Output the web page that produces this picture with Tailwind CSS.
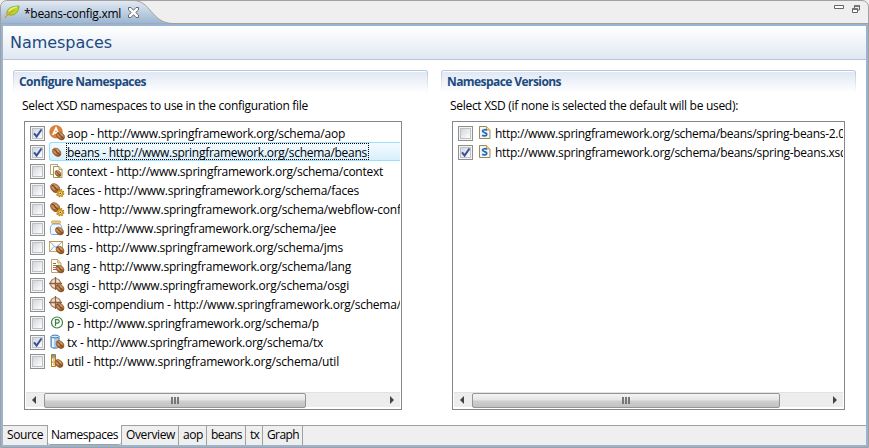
<!DOCTYPE html>
<html lang="en">
<head>
<meta charset="utf-8">
<title>beans-config.xml</title>
<script src="https://cdn.jsdelivr.net/npm/@tailwindcss/browser@4"></script>
</head>
<body class="w-[869px] h-[448px] overflow-hidden bg-[#efefef] font-['Open_Sans','Noto_Sans',sans-serif] text-[12px] leading-[19px] text-black">
<svg class="absolute h-0 w-0">
  <defs>
    <linearGradient id="bg" x1="0" y1="0" x2="1" y2="1"><stop offset="0" stop-color="#dca66e"/><stop offset="1" stop-color="#8a4a1c"/></linearGradient>
    <linearGradient id="tabg" x1="0" y1="0" x2="0" y2="1"><stop offset="0" stop-color="#e3eaf3"/><stop offset="1" stop-color="#9ab4d1"/></linearGradient>
    <symbol id="bean" viewBox="0 0 10 10"><ellipse cx="5" cy="5" rx="5.1" ry="3.7" transform="rotate(42 5 5)" fill="url(#bg)" stroke="#7d4720" stroke-width=".6"/><path d="M1.8 2.2C4.8 2 4.2 5 5.8 5.7S7.6 7 8.3 8" fill="none" stroke="#5b2a0c" stroke-width=".8"/><path d="M2.2 4.2l2.3 2.5M5.3 2.8l2 2" stroke="#e9bd8e" stroke-width=".8"/></symbol>
    <symbol id="gear" viewBox="0 0 8 8"><circle cx="4" cy="4" r="3.2" fill="none" stroke="#a6720b" stroke-width="1.6" stroke-dasharray="1.4 1.1"/><circle cx="4" cy="4" r="2.2" fill="#fff2c0" stroke="#d19a1d" stroke-width="1.5"/><circle cx="4" cy="4" r=".8" fill="#75470b"/></symbol>
    <symbol id="i-aop" viewBox="0 0 16 16"><circle cx="7" cy="6.800" r="6.300" fill="#dc8238" stroke="#c4702c" stroke-width=".7"/><path d="M3.800 10L7 3l3.100 7M5 7.800h4" fill="none" stroke="#fff" stroke-width="1.700"/><use href="#bean" x="7" y="6.500" width="9" height="9"/></symbol>
    <symbol id="i-beans" viewBox="0 0 16 16"><use href="#bean" x="3" y="3.500" width="9.500" height="9.500"/></symbol>
    <symbol id="i-context" viewBox="0 0 16 16"><path d="M1.500 1.500h7v10h-7z" fill="#fff" stroke="#b7a56a"/><path d="M4.500 3.500h5.500l3 3v8h-8.500z" fill="#fff" stroke="#a99453"/><path d="M10 3.500v3h3" fill="#e8d9a4" stroke="#a99453" stroke-width=".8"/><use href="#bean" x="5.500" y="7" width="7" height="7"/></symbol>
    <symbol id="i-faces" viewBox="0 0 16 16"><use href="#bean" x="1" y="1" width="10.500" height="10.500"/><use href="#gear" x="7" y="7" width="8.500" height="8.500"/></symbol>
    <symbol id="i-jee" viewBox="0 0 16 16"><rect x="2.500" y="1" width="9" height="2.500" rx="1" fill="#f4d078" stroke="#c6983e" stroke-width=".8"/><path d="M3.500 4h7.500c.2 1.200 1.800 1.600 1.800 3.500v5c0 1.200-.8 2-2 2H3.400c-1.200 0-2-.8-2-2v-5C1.400 5.600 3.300 5.200 3.500 4z" fill="#eff6fd" stroke="#7fa3d0"/><use href="#bean" x="6" y="6.500" width="9" height="9"/></symbol>
    <symbol id="i-jms" viewBox="0 0 16 16"><path d="M.5 2.500h13v10H.5z" fill="#f8fbff" stroke="#d0a85c"/><path d="M.5 2.500l6.500 6 6.500-6M.5 12.500l5-5.300" fill="none" stroke="#86a2c8" stroke-width=".9"/><path d="M0 2.500h14" stroke="#c6974b"/><use href="#bean" x="6.500" y="6.500" width="9" height="9"/></symbol>
    <symbol id="i-lang" viewBox="0 0 16 16"><path d="M2.500 1.500h6l3.500 3.500v9.500H2.500z" fill="#fff" stroke="#b9a46b"/><path d="M8.500 1.500V5H12" fill="#e9d8a2" stroke="#b9a46b" stroke-width=".8"/><path d="M4 5.500h3M4 11.500h3" stroke="#d84a42"/><path d="M4 7.500h5" stroke="#4c9b4a"/><path d="M4 9.500h4" stroke="#df6050"/><use href="#bean" x="6.500" y="6.500" width="9" height="9"/></symbol>
    <symbol id="i-osgi" viewBox="0 0 16 16"><circle cx="6.500" cy="6.500" r="5" fill="#f3e2d1" stroke="#aa8063" stroke-width="1.200"/><path d="M6.500 0v13M0 6.500h13" stroke="#8c5f43" stroke-width="1.300"/><use href="#bean" x="6.500" y="6.500" width="9" height="9"/></symbol>
    <symbol id="i-p" viewBox="0 0 16 16"><circle cx="8" cy="7.500" r="5.500" fill="#fff" stroke="#3a8040" stroke-width="1.200"/><path d="M6.500 11V4.700h1.800c2.600 0 2.600 3.500 0 3.500H6.500" fill="none" stroke="#3a8040" stroke-width="1.200"/></symbol>
    <symbol id="i-tx" viewBox="0 0 16 16"><path d="M2 2.500v10c0 2.200 8 2.200 8 0v-10" fill="#a9cdef" stroke="#3f78ae"/><path d="M4 4v9" stroke="#e7f4ff" stroke-width="2"/><ellipse cx="6" cy="2.500" rx="4" ry="1.400" fill="#d7eafa" stroke="#3f78ae"/><use href="#bean" x="6.500" y="6" width="9" height="9"/></symbol>
    <symbol id="i-util" viewBox="0 0 16 16"><path d="M2.500 1.500h4v12h-4z" fill="#fff" stroke="#b17d18"/><path d="M3 2h3v2.500H3z" fill="#7298d3"/><path d="M4 6h2v2H4zM4 10h2v2.500H4z" fill="#f0c75c"/><path d="M2.500 5h4M2.500 9h4" stroke="#b17d18"/><use href="#bean" x="5.500" y="6" width="9" height="9"/></symbol>
    <symbol id="i-xsd" viewBox="0 0 12 16"><path d="M.5 1.500h7l3.500 3.500v8.500H.5z" fill="#eef5fd" stroke="#9b8a55"/><path d="M7.500 1.500V5H11" fill="#f6d58d" stroke="#cfa047"/><path d="M7.900 5.300C6.900 4.500 3.500 4.300 3.500 6.100c0 1.800 4.300 1.200 4.300 3.200 0 1.900-3.300 1.800-4.600.9" fill="none" stroke="#2c69a9" stroke-width="1.700"/></symbol>
  </defs>
</svg>

<div class="relative flex h-[448px] w-[869px] flex-col overflow-hidden rounded-t-[7px] border border-[#a0a0a0] bg-[#efefef]">
  <!-- Editor tab strip -->
  <div class="relative flex h-[23px] shrink-0 items-center border-b border-[#a0a0a0]">
    <svg class="absolute -left-px -top-px" width="176" height="24" viewBox="0 0 176 24"><path d="M.5 24V7Q.5.5 7 .5H133C151 .5 151 22.500 172 23.500V24z" fill="url(#tabg)" stroke="#a0a0a0"/></svg>
    <svg class="relative ml-[3px]" width="17" height="14" viewBox="0 0 17 14"><path d="M3 10C2 4 6 1.500 15 1c0 6-5 11-11 8.500z" fill="#b5d92c" stroke="#7da51b" stroke-width=".8"/><path d="M5 6C7 3 10 2.500 13 2" stroke="#e2f27b" stroke-width="1.500" fill="none"/><path d="M.8 13Q4 8.500 11 5" fill="none" stroke="#e79629" stroke-width="1.300"/></svg>
    <span class="relative ml-[3px] mt-[2px] whitespace-nowrap" data-w="97">*beans-config.xml</span>
    <svg class="relative ml-[7px]" width="11" height="11" viewBox="0 0 11 11"><path d="M.5.5H3l2.500 2.800L8 .5h2.500V3L7.700 5.500l2.800 2.500v2.500H8L5.500 7.700 3 10.500H.5V8l2.800-2.500L.5 3z" fill="#fff" stroke="#65686c"/></svg>
    <svg class="ml-auto mr-[7px] mb-[6px]" width="27" height="9" viewBox="0 0 27 9"><path d="M.5.5h9v3h-9z" fill="#fff" stroke="#666"/><path d="M20.500 3.500V1h5v4h-2" fill="none" stroke="#666"/><path d="M20 1h6" stroke="#666" stroke-width="1.500"/><path d="M18.500 4h5v3.500h-5z" fill="#fff" stroke="#666"/><path d="M18 4h6" stroke="#666" stroke-width="1.500"/></svg>
  </div>

  <div class="flex min-h-0 flex-1 flex-col border-2 border-[#99b4d1] bg-white">
    <!-- Form heading -->
    <header class="flex h-[34px] shrink-0 items-center border-b border-[#b7c6dc] bg-gradient-to-b from-white to-[#e1e8f2] pl-[7px] font-['DejaVu_Sans'] text-[16px] text-[#1b4a80]"><h1 class="whitespace-nowrap"><span data-w="102">Namespaces</span></h1></header>

    <main class="flex min-h-0 flex-1 gap-[13px] bg-white pl-[10px] pt-[10px]">
      <section class="w-[415px] shrink-0">
        <div class="h-[23px] rounded-t-[3px] bg-gradient-to-b from-[#b5c5de] to-white px-px pt-px"><h2 class="h-[22px] rounded-t-[2px] border-t border-white bg-gradient-to-b from-[#e1e8f3] to-white pl-[5px] leading-[20px] font-bold text-[#1b4a80] whitespace-nowrap"><span data-w="127">Configure Namespaces</span></h2></div>
        <p class="mt-[3px] ml-[9px] whitespace-nowrap"><span data-w="286">Select XSD namespaces to use in the configuration file</span></p>
        <div class="ml-[11px] mt-[6px] flex h-[289px] w-[378px] flex-col border border-[#828790] px-px pt-px pb-[2px]">
          <div id="left" class="flex-1 overflow-hidden"></div>
          <div class="flex h-[15px] shrink-0 items-center border-t border-[#e2e2e2] bg-[#ededed] pl-[6px] pr-[6px]">
            <svg width="4" height="8" viewBox="0 0 4 8"><path d="M4 0v8L0 4z" fill="#444"/></svg>
            <div class="ml-[8px] flex h-[15px] w-[262px] items-center justify-center gap-[1px] rounded-[2px] border border-[#959595] bg-[linear-gradient(#f4f4f4_0%,#e4e4e4_48%,#cfcfcf_52%,#c2c2c4_100%)]"><i class="h-[7px] w-[2px] bg-[#777]"></i><i class="h-[7px] w-[2px] bg-[#777]"></i><i class="h-[7px] w-[2px] bg-[#777]"></i></div>
            <svg class="ml-auto" width="4" height="8" viewBox="0 0 4 8"><path d="M0 0v8l4-4z" fill="#444"/></svg>
          </div>
        </div>
      </section>
      <section class="w-[415px] shrink-0">
        <div class="h-[23px] rounded-t-[3px] bg-gradient-to-b from-[#b5c5de] to-white px-px pt-px"><h2 class="h-[22px] rounded-t-[2px] border-t border-white bg-gradient-to-b from-[#e1e8f3] to-white pl-[5px] leading-[20px] font-bold text-[#1b4a80] whitespace-nowrap"><span data-w="114">Namespace Versions</span></h2></div>
        <p class="mt-[3px] ml-[9px] whitespace-nowrap"><span data-w="288">Select XSD (if none is selected the default will be used):</span></p>
        <div class="ml-[11px] mt-[6px] flex h-[289px] w-[393px] flex-col border border-[#828790] px-px pt-px pb-[2px]">
          <div id="right" class="flex-1 overflow-hidden"></div>
          <div class="flex h-[15px] shrink-0 items-center border-t border-[#e2e2e2] bg-[#ededed] pl-[6px] pr-[6px]">
            <svg width="4" height="8" viewBox="0 0 4 8"><path d="M4 0v8L0 4z" fill="#444"/></svg>
            <div class="ml-[8px] flex h-[15px] w-[308px] items-center justify-center gap-[1px] rounded-[2px] border border-[#959595] bg-[linear-gradient(#f4f4f4_0%,#e4e4e4_48%,#cfcfcf_52%,#c2c2c4_100%)]"><i class="h-[7px] w-[2px] bg-[#777]"></i><i class="h-[7px] w-[2px] bg-[#777]"></i><i class="h-[7px] w-[2px] bg-[#777]"></i></div>
            <svg class="ml-auto" width="4" height="8" viewBox="0 0 4 8"><path d="M0 0v8l4-4z" fill="#444"/></svg>
          </div>
        </div>
      </section>
    </main>

    <!-- Page tabs -->
    <nav class="flex h-[20px] shrink-0 bg-[#efefef] leading-[18px] whitespace-nowrap">
      <div class="w-[45px] border-t border-r border-[#a0a0a0] pl-[4px]"><span data-w="36">Source</span></div>
      <div class="w-[73px] rounded-b-[3px] border-b border-[#a0a0a0] bg-white pl-[3px] pt-px"><span data-w="67">Namespaces</span></div>
      <div class="w-[58px] border border-b-0 border-[#a0a0a0] pl-[4px]"><span data-w="49">Overview</span></div>
      <div class="w-[28px] border-t border-r border-[#a0a0a0] pl-[4px]"><span data-w="20">aop</span></div>
      <div class="w-[39px] border-t border-r border-[#a0a0a0] pl-[4px]"><span data-w="31">beans</span></div>
      <div class="w-[17px] border-t border-r border-[#a0a0a0] pl-[4px]"><span data-w="9">tx</span></div>
      <div class="w-[40px] border-t border-r border-[#a0a0a0] pl-[4px]"><span data-w="32">Graph</span></div>
      <div class="flex-1 border-t border-[#a0a0a0]"></div>
    </nav>
  </div>
</div>

<script>
const base = 'http://www.springframework.org/schema/';
const check = on => `<span class="mt-[2px] flex h-[15px] w-[15px] shrink-0 border border-[#8e8f8f] bg-[#f4f4f4] p-px"><svg class="h-[11px] w-[11px] border border-[#bdc0c5] bg-gradient-to-br from-[#d2d5da] to-white overflow-visible" viewBox="0 0 9 9">${on ? '<path d="M1 4.300L3.600 7.500 8.500.5" fill="none" stroke="#35519b" stroke-width="2"/>' : ''}</svg></span>`;

// name, icon, checked, rendered width of the label
const spaces = [
  ['aop', 'aop', 1, 278], ['beans', 'beans', 1, 300], ['context', 'context', 0, 316], ['faces', 'faces', 0, 292],
  ['flow', 'faces', 0, 343, 'webflow-config'], ['jee', 'jee', 0, 269], ['jms', 'jms', 0, 276], ['lang', 'lang', 0, 284],
  ['osgi', 'osgi', 0, 282], ['osgi-compendium', 'osgi', 0, 431], ['p', 'p', 0, 252], ['tx', 'tx', 1, 256], ['util', 'util', 0, 272]
];
document.getElementById('left').innerHTML = spaces.map(([n, icon, on, w, path]) => `
  <div class="flex h-[19px] items-center whitespace-nowrap pl-[4px]">${check(on)}
    <div class="ml-[4px] flex h-[19px] min-w-0 flex-1 items-center ${n === 'beans' ? 'rounded-l-[3px] border border-r-0 border-[#99defd] bg-gradient-to-b from-[#f5fbff] to-[#d7effc]' : 'border border-r-0 border-transparent'}">
      <svg class="-ml-px h-[16px] w-[16px] shrink-0"><use href="#i-${icon}"/></svg>
      <div class="flex h-[17px] items-center ${n === 'beans' ? 'border border-dotted border-black pr-px' : 'border border-transparent'} ml-px"><span class="mt-px" data-w="${w}">${n} - ${base}${path || n}</span></div>
    </div>
  </div>`).join('');
document.getElementById('right').innerHTML = [['spring-beans-2.0.xsd', 0, 371], ['spring-beans.xsd', 1, 352]].map(([f, on, w]) => `
  <div class="flex h-[19px] items-center whitespace-nowrap pl-[4px]">${check(on)}
    <svg class="ml-[6px] h-[16px] w-[12px] shrink-0"><use href="#i-xsd"/></svg><span class="ml-[4px] mt-px" data-w="${w}">${base}beans/${f}</span>
  </div>`).join('');

// Spread each label over its nominal width once the styles are in force
const fit = () => document.querySelectorAll('[data-w]').forEach(el => {
  el.style.letterSpacing = '0px';
  const r = document.createRange();
  r.selectNodeContents(el);
  el.style.letterSpacing = (el.dataset.w - r.getBoundingClientRect().width) / el.textContent.length + 'px';
});
addEventListener('load', () => { fit(); requestAnimationFrame(fit); document.fonts.ready.then(fit); });
</script>
</body>
</html>
